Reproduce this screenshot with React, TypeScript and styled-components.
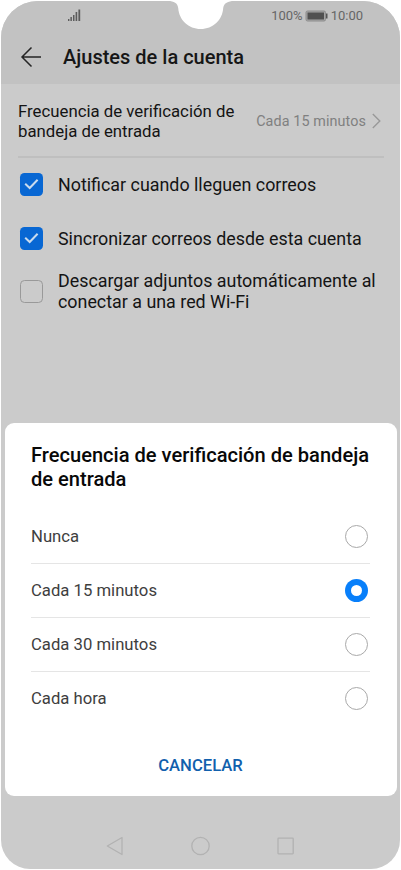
import React, { useState } from "react";
import styled, { createGlobalStyle } from "styled-components";

const GlobalStyle = createGlobalStyle`
  * { box-sizing: border-box; }
  body { margin: 0; background: #fff; font-family: Roboto, "Liberation Sans", sans-serif; }
  button { font-family: inherit; }
`;

const Stage = styled.div`
  width: 401px;
  height: 870px;
  padding: 1px;
  background: #fff;
  overflow: hidden;
`;

const Phone = styled.div`
  position: relative;
  width: 399px;
  height: 868px;
  display: flex;
  flex-direction: column;
  background: #cbcbcb;
  border-radius: 37px 37px 29px 29px;
  overflow: hidden;
`;

const Notch = styled.svg`
  position: absolute;
  left: 167px;
  top: -1px;
`;

const TopArea = styled.div`
  flex: none;
  height: 83px;
  background: #c2c2c2;
`;

const StatusBar = styled.div`
  height: 30px;
  display: flex;
  align-items: center;
  justify-content: space-between;
  padding: 0 37px 0 67px;
  color: #666;
`;

const SignalIcon = styled.svg`
  margin-top: -2px;
`;

const StatusRight = styled.div`
  display: flex;
  align-items: center;
  font-size: 13px;
  line-height: 16px;
`;

const BatteryIcon = styled.svg`
  margin: 0 3px 0 2px;
`;

const Header = styled.header`
  height: 52px;
  display: flex;
  align-items: center;
  padding-left: 19px;
`;

const Title = styled.h1`
  margin: 0 0 0 21px;
  font-size: 20px;
  line-height: 24px;
  font-weight: 500;
  color: #161616;
  white-space: nowrap;
`;

const FrequencyRow = styled.div`
  flex: none;
  height: 74px;
  margin: 0 16.5px 0 17px;
  display: flex;
  align-items: center;
  justify-content: space-between;
  border-bottom: 2px solid #bfbfbf;
`;

const RowLabel = styled.div`
  font-size: 16.77px;
  line-height: 20px;
  color: #141414;
  white-space: nowrap;
  margin-top: 2px;
`;

const RowValue = styled.div`
  display: flex;
  align-items: center;
  gap: 6px;
  padding-right: 2.5px;
  margin-top: 2px;
  font-size: 14.35px;
  letter-spacing: 0.1px;
  color: #808080;
  white-space: nowrap;
`;

const CheckList = styled.div`
  display: flex;
  flex-direction: column;
  margin-top: -1px;
`;

const CheckRow = styled.label`
  flex: none;
  height: 54px;
  padding-left: 18.5px;
  display: flex;
  align-items: center;
  gap: 15.5px;
  &:last-child { margin-top: -1px; }
`;

const CheckText = styled.span`
  font-size: 17.86px;
  line-height: 21px;
  color: #141414;
  white-space: nowrap;
`;

const Box = styled.span<{ $on: boolean }>`
  flex: none;
  width: 23px;
  height: 23px;
  display: grid;
  place-items: center;
  border-radius: 4.5px;
  border: ${(p) => (p.$on ? "none" : "1px solid #999")};
  background: ${(p) => (p.$on ? "#0867d3" : "transparent")};
`;

const Sheet = styled.section`
  flex: none;
  height: 373px;
  margin: auto 3.5px 0;
  padding: 20px 26.5px 0 26.5px;
  display: flex;
  flex-direction: column;
  background: #fff;
  border-radius: 9px;
`;

const SheetTitle = styled.h2`
  margin: 0 0 19px;
  font-size: 20.1px;
  line-height: 24px;
  font-weight: 500;
  color: #080808;
  white-space: nowrap;
`;

const Option = styled.div`
  flex: none;
  height: 54px;
  display: flex;
  align-items: center;
  justify-content: space-between;
  padding-right: 2px;
  font-size: 16.7px;
  color: #3e3e3e;
  border-bottom: 1px solid #e5e5e5;
  &:last-of-type { border-bottom-color: transparent; }
`;

const Radio = styled.span<{ $on: boolean }>`
  width: 23px;
  height: 23px;
  display: grid;
  place-items: center;
  border-radius: 50%;
  border: ${(p) => (p.$on ? "none" : "1px solid #a9a9a9")};
  background: ${(p) => (p.$on ? "#087ffa" : "transparent")};
  &::after {
    content: "";
    width: 11.5px;
    height: 11.5px;
    border-radius: 50%;
    background: #fff;
  }
`;

const Cancel = styled.button`
  align-self: center;
  margin: 27px 0 0;
  padding: 0;
  border: 0;
  background: none;
  font-size: 16.65px;
  line-height: 26px;
  font-weight: 500;
  color: #1160ad;
`;

const NavBar = styled.nav`
  flex: none;
  height: 73px;
  display: flex;
  align-items: center;
  justify-content: center;
  gap: 67px;
  padding: 27px 1px 0 0;
  color: #b2b2b2;
`;

const checks = [
  { lines: ["Notificar cuando lleguen correos"], on: true },
  { lines: ["Sincronizar correos desde esta cuenta"], on: true },
  { lines: ["Descargar adjuntos automáticamente al", "conectar a una red Wi-Fi"], on: false },
];

const options = ["Nunca", "Cada 15 minutos", "Cada 30 minutos", "Cada hora"];

function Lines({ lines }: { lines: string[] }) {
  return (
    <>
      {lines.map((line, i) => (
        <React.Fragment key={line}>
          {i > 0 && <br />}
          {line}
        </React.Fragment>
      ))}
    </>
  );
}

export default function App() {
  const [selected, setSelected] = useState(1);
  return (
    <Stage>
      <GlobalStyle />
      <Phone>
        <TopArea>
          <StatusBar>
            <SignalIcon width="13" height="12" viewBox="0 0 13 12" fill="#5c5c5c">
              <rect x="0" y="10" width="1.4" height="2" />
              <rect x="2.4" y="8" width="1.5" height="4" />
              <rect x="5" y="6" width="1.5" height="6" />
              <rect x="7.6" y="3" width="1.6" height="9" />
              <rect x="10.4" y="0.5" width="1.8" height="11.5" />
            </SignalIcon>
            <StatusRight>
              <span>100%</span>
              <BatteryIcon width="23" height="12" viewBox="0 0 23 12">
                <rect x="1" y="1" width="19.5" height="10" rx="1.5" fill="#a5a5a5" stroke="#8c8c8c" />
                <rect x="2.5" y="2.5" width="16.5" height="7" fill="#505050" />
                <rect x="21" y="3.5" width="1.5" height="5" fill="#555" />
              </BatteryIcon>
              <span>10:00</span>
            </StatusRight>
          </StatusBar>
          <Header>
            <svg width="22" height="22" viewBox="0 0 22 22" fill="none" stroke="#252525" strokeWidth="1.5">
              <path d="M11.5 1.5 L2 11 L11.5 20.5 M2 11 H21" />
            </svg>
            <Title>Ajustes de la cuenta</Title>
          </Header>
        </TopArea>
        <FrequencyRow>
          <RowLabel>
            <Lines lines={["Frecuencia de verificación de", "bandeja de entrada"]} />
          </RowLabel>
          <RowValue>
            Cada 15 minutos
            <svg width="9" height="16" viewBox="0 0 9 16" fill="none" stroke="#999" strokeWidth="1.4">
              <path d="M0.8 1 L7.8 8 L0.8 15" />
            </svg>
          </RowValue>
        </FrequencyRow>
        <CheckList>
          {checks.map((c) => (
            <CheckRow key={c.lines[0]}>
              <Box $on={c.on}>
                {c.on && (
                  <svg width="15" height="12" viewBox="0 0 15 12" fill="none" stroke="#c9dbee" strokeWidth="2">
                    <path d="M1.2 5.8 L5.7 10 L13.6 1.8" />
                  </svg>
                )}
              </Box>
              <CheckText>
                <Lines lines={c.lines} />
              </CheckText>
            </CheckRow>
          ))}
        </CheckList>
        <Sheet>
          <SheetTitle>
            <Lines lines={["Frecuencia de verificación de bandeja", "de entrada"]} />
          </SheetTitle>
          {options.map((o, i) => (
            <Option key={o} onClick={() => setSelected(i)}>
              {o}
              <Radio $on={selected === i} />
            </Option>
          ))}
          <Cancel>CANCELAR</Cancel>
        </Sheet>
        <NavBar>
          <svg width="18" height="20" viewBox="0 0 18 20" fill="none" stroke="currentColor" strokeWidth="1.3" strokeLinejoin="round">
            <path d="M16 1.5 V18.5 L1.3 10 Z" />
          </svg>
          <svg width="19" height="20" viewBox="0 0 19 20" fill="none" stroke="currentColor" strokeWidth="1.3">
            <circle cx="9.5" cy="10" r="8.7" />
          </svg>
          <svg width="18" height="20" viewBox="0 0 18 20" fill="none" stroke="currentColor" strokeWidth="1.3">
            <rect x="1" y="2.2" width="15.2" height="15.6" rx="0.5" />
          </svg>
        </NavBar>
        <Notch width="66" height="32" viewBox="0 0 66 32" fill="#fff">
          <path d="M0 0 H66 V1 C60 1 56 3 55.2 8 C54.5 20 45 29 32.7 29 C20.5 29 11 20 10.2 8 C9.5 3 6 1 0 1 Z" />
        </Notch>
      </Phone>
    </Stage>
  );
}
